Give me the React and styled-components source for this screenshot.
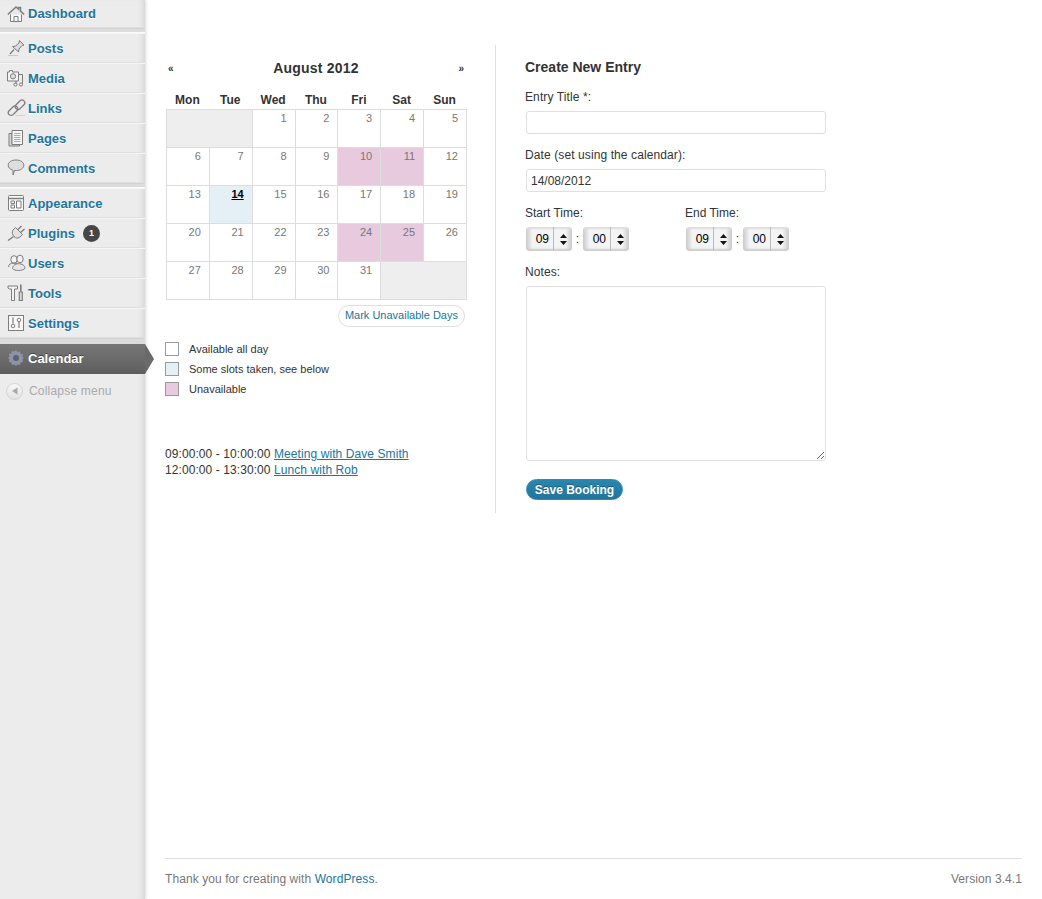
import styled, { createGlobalStyle } from 'styled-components'

const GlobalStyle = createGlobalStyle`
  html, body {
    margin: 0;
    padding: 0;
    background: #fff;
  }
  body {
    font-family: "Liberation Sans", Arial, sans-serif;
    font-size: 12px;
    color: #333;
  }
  * {
    box-sizing: border-box;
  }
`

const stroke = { fill: 'none', stroke: '#7d7d7d', strokeWidth: 1 }

const icons = {
  dashboard: (
    <svg width="18" height="18" viewBox="0 0 18 18" {...stroke}>
      <path d="M3.500 8v8.500h11V8" fill="#f8f8f8" />
      <path d="M.8 9.500L9 2l2.500 2.200V2.500h2v3.600l3.700 3.400" strokeWidth="1.500" fill="#e8e8e8" />
      <path d="M7 16.500v-5h4v5M4 16.500h10" />
    </svg>
  ),
  posts: (
    <svg width="20" height="18" viewBox="0 0 20 18" {...stroke}>
      <path d="M12.500 1.500l4.500 4.500-2 .5-3 3.500-.5 3-6-5.500 3-.5 3.500-3z" fill="#dcdcdc" />
      <path d="M7 10.500l-4 4.500" strokeWidth="1.300" />
      <path d="M1 16.500h10" stroke="#c8c8c8" />
    </svg>
  ),
  media: (
    <svg width="18" height="18" viewBox="0 0 18 18" {...stroke}>
      <path d="M.5 3h2V1.500h3V3h6v9H.5z" fill="#f3f3f3" />
      <circle cx="6" cy="7.300" r="2.600" fill="#ddd" />
      <path d="M12 5.500h3.500M15.500 5.500v9M9 12v3" />
      <circle cx="8.500" cy="15.500" r="1.600" />
      <circle cx="14" cy="15.500" r="1.600" />
    </svg>
  ),
  links: (
    <svg width="20" height="18" viewBox="0 0 20 18" {...stroke}>
      <rect x="0.500" y="9" width="11" height="5.500" rx="2.700" transform="rotate(-45 6 11.700)" strokeWidth="1.300" />
      <rect x="7.500" y="3" width="11" height="5.500" rx="2.700" transform="rotate(-45 13 5.700)" strokeWidth="1.300" />
      <path d="M8 16.500h10" stroke="#d0d0d0" />
    </svg>
  ),
  pages: (
    <svg width="18" height="18" viewBox="0 0 18 18" {...stroke}>
      <path d="M2 4.500h3v11h7.500v1.500H2z" fill="#d8d8d8" />
      <path d="M5 1.500h10.500v14H5z" fill="#f6f6f6" />
      <path d="M7 4.500h6.500M7 6.500h6.500M7 8.500h6.500M7 10.500h6.500M7 12.500h6.500" stroke="#aaa" />
    </svg>
  ),
  comments: (
    <svg width="18" height="18" viewBox="0 0 18 18" {...stroke}>
      <path d="M9 1c4.700 0 7.800 2.300 7.800 5.200S13.700 11.500 9.700 11.500H7.500L6 16v-4.800C3.300 10.600 1.200 8.700 1.200 6.200 1.200 3.300 4.300 1 9 1z" fill="#dedede" />
    </svg>
  ),
  appearance: (
    <svg width="18" height="18" viewBox="0 0 18 18" {...stroke}>
      <rect x="1.500" y="1.500" width="15" height="15" rx="1" fill="#fafafa" />
      <path d="M1.500 4.500h15" strokeWidth="1.500" />
      <path d="M4 7h3.500v2.500H4zM4 11h3.500v3H4zM9.500 7h4.500v7H9.500z" />
    </svg>
  ),
  plugins: (
    <svg width="20" height="18" viewBox="0 0 20 18" {...stroke}>
      <path d="M8.500 3.500l7 7-2.500 2.500c-2.200 1.800-4.500 1.200-6-.5S4.500 8.500 6 6z" fill="#e2e2e2" />
      <path d="M11 5.500L14.500 2M13.500 8.500L17.500 5M6.500 12.500L1 16.500" strokeWidth="1.400" />
    </svg>
  ),
  users: (
    <svg width="20" height="18" viewBox="0 0 20 18" {...stroke}>
      <ellipse cx="7" cy="5.500" rx="3.200" ry="3.800" fill="#f3f3f3" />
      <ellipse cx="13" cy="5" rx="3.200" ry="3.800" fill="#f3f3f3" />
      <path d="M1.500 13c0-2.500 2-4 5.500-4 1.500 0 3 .5 4 1.500" />
      <path d="M5.500 14.500c0-2.600 2.500-4.800 6-4.800s6.500 2 6.500 4.500c-1 1.600-3.800 2.300-6.500 2.300s-5-.6-6-2z" fill="#e6e6e6" />
    </svg>
  ),
  tools: (
    <svg width="20" height="18" viewBox="0 0 20 18" {...stroke}>
      <path d="M1 2h9.500v3H7.500v11.500h-3V5H2.500L1 4z" fill="#f3f3f3" />
      <path d="M13.800 .5v7" strokeWidth="1.600" />
      <path d="M12.300 8h3v8.500h-3z" fill="#ddd" strokeWidth="1.200" />
    </svg>
  ),
  settings: (
    <svg width="18" height="18" viewBox="0 0 18 18" {...stroke}>
      <rect x="1.500" y="1.500" width="15" height="15" fill="#fafafa" />
      <path d="M6 3.500v6M12 8v6" strokeWidth="1.200" />
      <circle cx="6" cy="12" r="1.800" />
      <circle cx="12" cy="6" r="1.800" />
    </svg>
  ),
  calendar: (
    <svg width="18" height="18" viewBox="0 0 18 18">
      <path
        d="M9 1l1.500 2 2.500-.7.600 2.500 2.500.6-.7 2.500L17 9l-1.600 1.500.7 2.500-2.500.6-.6 2.500-2.500-.7L9 17l-1.500-1.600-2.500.7-.6-2.500-2.500-.6.7-2.500L1 9l1.600-1.500-.7-2.500 2.500-.6.6-2.500 2.500.7z"
        fill="#8e93a8"
      />
      <circle cx="9" cy="9" r="3" fill="#5d6071" />
    </svg>
  ),
}

const contentItems = [
  { key: 'posts', label: 'Posts' },
  { key: 'media', label: 'Media' },
  { key: 'links', label: 'Links' },
  { key: 'pages', label: 'Pages' },
  { key: 'comments', label: 'Comments' },
]
const adminItems = [
  { key: 'appearance', label: 'Appearance' },
  { key: 'plugins', label: 'Plugins', badge: 1 },
  { key: 'users', label: 'Users' },
  { key: 'tools', label: 'Tools' },
  { key: 'settings', label: 'Settings' },
]

// span = number of empty columns merged into one grey cell
const weeks = [
  [{ span: 2 }, 1, 2, 3, 4, 5],
  [6, 7, 8, 9, 10, 11, 12],
  [13, 14, 15, 16, 17, 18, 19],
  [20, 21, 22, 23, 24, 25, 26],
  [27, 28, 29, 30, 31, { span: 2 }],
]
const unavailable = [10, 11, 24, 25]

function dayKind(day) {
  if (day === 14) return 'today'
  if (unavailable.includes(day)) return 'off'
  return 'free'
}

function MenuRows({ items }) {
  return items.map((item) => (
    <MenuRow key={item.key}>
      <IconSlot>{icons[item.key]}</IconSlot>
      <MenuLabel>{item.label}</MenuLabel>
      {item.badge && <Badge>{item.badge}</Badge>}
    </MenuRow>
  ))
}

function TimePicker({ value }) {
  return (
    <Stepper>
      <StepperValue>{value}</StepperValue>
      <StepperArrows>
        <svg width="7" height="11" viewBox="0 0 7 11" fill="#111">
          <path d="M3.500 0L7 4H0zM3.500 11L0 7h7z" />
        </svg>
      </StepperArrows>
    </Stepper>
  )
}

function App() {
  return (
    <Page>
      <GlobalStyle />
      <Sidebar>
        <FirstRow>
          <IconSlot>{icons.dashboard}</IconSlot>
          <MenuLabel>Dashboard</MenuLabel>
        </FirstRow>
        <Separator />
        <MenuRows items={contentItems} />
        <Separator />
        <MenuRows items={adminItems} />
        <LastSeparator />
        <ActiveRow>
          <IconSlot>{icons.calendar}</IconSlot>
          <ActiveLabel>Calendar</ActiveLabel>
        </ActiveRow>
        <CollapseRow>
          <CollapseButton>
            <svg width="8" height="8" viewBox="0 0 8 8" fill="#aaa">
              <path d="M6.500 0.500v7L1 4z" />
            </svg>
          </CollapseButton>
          Collapse menu
        </CollapseRow>
      </Sidebar>

      <Content>
        <Columns>
          <LeftColumn>
            <MonthBar>
              <MonthNav>«</MonthNav>
              <MonthTitle>August 2012</MonthTitle>
              <MonthNav>»</MonthNav>
            </MonthBar>
            <CalendarTable>
              <thead>
                <tr>
                  {['Mon', 'Tue', 'Wed', 'Thu', 'Fri', 'Sat', 'Sun'].map((d) => (
                    <DayHead key={d}>{d}</DayHead>
                  ))}
                </tr>
              </thead>
              <tbody>
                {weeks.map((week, w) => (
                  <tr key={w}>
                    {week.map((day, d) =>
                      day.span ? (
                        <DayCell key={d} colSpan={day.span} $kind="empty" />
                      ) : (
                        <DayCell key={d} $kind={dayKind(day)}>
                          {day}
                        </DayCell>
                      ),
                    )}
                  </tr>
                ))}
              </tbody>
            </CalendarTable>
            <MarkRow>
              <MarkButton>Mark Unavailable Days</MarkButton>
            </MarkRow>
            <Legend>
              <LegendRow>
                <Swatch $color="#fff" />
                Available all day
              </LegendRow>
              <LegendRow>
                <Swatch $color="#e5eff6" />
                Some slots taken, see below
              </LegendRow>
              <LegendRow>
                <Swatch $color="#e8cade" />
                Unavailable
              </LegendRow>
            </Legend>
            <Events>
              <div>
                09:00:00 - 10:00:00 <EventLink href="#">Meeting with Dave Smith</EventLink>
              </div>
              <div>
                12:00:00 - 13:30:00 <EventLink href="#">Lunch with Rob</EventLink>
              </div>
            </Events>
          </LeftColumn>

          <RightColumn>
            <FormTitle>Create New Entry</FormTitle>
            <FieldLabel>Entry Title *:</FieldLabel>
            <TextInput type="text" />
            <FieldLabel>Date (set using the calendar):</FieldLabel>
            <TextInput type="text" defaultValue="14/08/2012" />
            <TimeRow>
              <TimeGroup>
                <TimeLabel>Start Time:</TimeLabel>
                <TimeControls>
                  <TimePicker value="09" />
                  <Colon>:</Colon>
                  <TimePicker value="00" />
                </TimeControls>
              </TimeGroup>
              <TimeGroup>
                <TimeLabel>End Time:</TimeLabel>
                <TimeControls>
                  <TimePicker value="09" />
                  <Colon>:</Colon>
                  <TimePicker value="00" />
                </TimeControls>
              </TimeGroup>
            </TimeRow>
            <FieldLabel>Notes:</FieldLabel>
            <Notes />
            <SaveButton>Save Booking</SaveButton>
          </RightColumn>
        </Columns>

        <Footer>
          <span>
            Thank you for creating with <FooterLink href="#">WordPress</FooterLink>.
          </span>
          <span>Version 3.4.1</span>
        </Footer>
      </Content>
    </Page>
  )
}

const Page = styled.div`
  display: flex;
  min-height: 899px;
`

const Sidebar = styled.nav`
  width: 145px;
  flex: none;
  background: #ececec;
  box-shadow: inset -6px 0 6px -5px #ccc, 1px 0 3px rgba(0, 0, 0, 0.15);
  position: relative;
`

const MenuRow = styled.div`
  display: flex;
  align-items: center;
  height: 30px;
  padding-left: 7px;
  border-top: 1px solid #f6f6f6;
  border-bottom: 1px solid #dfdfdf;
`

const FirstRow = styled(MenuRow)`
  height: 28px;
  border-top: none;
`

const IconSlot = styled.span`
  width: 21px;
  height: 18px;
  flex: none;
  display: flex;
`

const MenuLabel = styled.span`
  font-size: 13px;
  font-weight: bold;
  color: #21759b;
  text-shadow: 0 1px 0 #fff;
`

const Badge = styled.span`
  width: 17px;
  height: 17px;
  margin-left: 8px;
  border-radius: 50%;
  background: #464646;
  color: #fff;
  font-size: 9px;
  font-weight: bold;
  display: flex;
  align-items: center;
  justify-content: center;
`

const Separator = styled.div`
  height: 5px;
  background: #dcdcdc;
  border-top: 1px solid #d2d2d2;
  border-bottom: 1px solid #fafafa;
`

const LastSeparator = styled(Separator)`
  height: 6px;
  border-bottom: none;
`

const ActiveRow = styled.div`
  position: relative;
  display: flex;
  align-items: center;
  height: 30px;
  padding: 0 0 2px 7px;
  background: linear-gradient(to bottom, #777, #5e5e5e);

  &::after {
    content: '';
    position: absolute;
    left: 100%;
    top: 0;
    border-style: solid;
    border-width: 15px 0 15px 9px;
    border-color: transparent transparent transparent #6a6a6a;
  }
`

const ActiveLabel = styled.span`
  font-size: 13px;
  font-weight: bold;
  color: #fff;
  text-shadow: 0 -1px 0 rgba(0, 0, 0, 0.4);
`

const CollapseRow = styled.div`
  display: flex;
  align-items: center;
  gap: 6px;
  height: 34px;
  padding-left: 6px;
  font-size: 12px;
  letter-spacing: 0.2px;
  color: #aaa;
`

const CollapseButton = styled.span`
  width: 17px;
  height: 17px;
  border-radius: 50%;
  border: 1px solid #d4d4d4;
  background: linear-gradient(to bottom, #f8f8f8, #e2e2e2);
  display: flex;
  align-items: center;
  justify-content: center;
`

const Content = styled.main`
  flex: 1;
  display: flex;
  flex-direction: column;
  padding: 45px 20px 0 20px;
`

const Columns = styled.div`
  display: flex;
  align-items: flex-start;
`

const LeftColumn = styled.section`
  width: 331px;
  height: 468px;
  border-right: 1px solid #dfdfdf;
`

const MonthBar = styled.div`
  width: 302px;
  height: 47px;
  display: flex;
  align-items: flex-start;
  justify-content: space-between;
  padding: 15px 3px 0;
`

const MonthNav = styled.span`
  font-size: 10px;
  font-weight: bold;
  line-height: 17px;
`

const MonthTitle = styled.span`
  font-size: 14px;
  letter-spacing: 0.2px;
  font-weight: bold;
  line-height: 17px;
`

const CalendarTable = styled.table`
  width: 301px;
  border-collapse: collapse;
  table-layout: fixed;
  margin-left: 1px;
`

const DayHead = styled.th`
  height: 17px;
  padding: 1px 1px 1px 0;
  font-size: 12px;
  font-weight: bold;
  text-align: center;
`

const dayBackgrounds = {
  empty: '#eee',
  today: '#e5eff6',
  off: '#e8cade',
  free: '#fff',
}

const DayCell = styled.td`
  height: 38px;
  padding: 1px 8px 0 0;
  vertical-align: top;
  text-align: right;
  font-size: 11px;
  line-height: 14px;
  border: 1px solid #ddd;
  background: ${(p) => dayBackgrounds[p.$kind]};
  color: ${(p) => (p.$kind === 'today' ? '#000' : '#777')};
  font-weight: ${(p) => (p.$kind === 'today' ? 'bold' : 'normal')};
  text-decoration: ${(p) => (p.$kind === 'today' ? 'underline' : 'none')};
`

const MarkRow = styled.div`
  width: 300px;
  display: flex;
  justify-content: flex-end;
  margin-top: 5px;
`

const MarkButton = styled.a`
  height: 22px;
  padding: 0 6px;
  line-height: 19px;
  font-size: 11px;
  color: #21759b;
  border: 1px solid #dfdfdf;
  border-radius: 11px;
`

const Legend = styled.div`
  margin-top: 15px;
  display: flex;
  flex-direction: column;
  gap: 6px;
`

const LegendRow = styled.div`
  display: flex;
  align-items: center;
  gap: 10px;
  height: 14px;
  font-size: 11px;
`

const Swatch = styled.span`
  width: 14px;
  height: 14px;
  border: 1px solid #999;
  background: ${(p) => p.$color};
`

const Events = styled.div`
  margin-top: 50px;
  font-size: 12px;
  line-height: 16px;
  letter-spacing: 0.08px;
`

const EventLink = styled.a`
  color: #21759b;
  text-decoration: underline;
`

const RightColumn = styled.section`
  padding: 14px 0 0 29px;
  width: 360px;
`

const FormTitle = styled.h3`
  margin: 0 0 14px;
  font-size: 14px;
  line-height: 17px;
  font-weight: bold;
`

const FieldLabel = styled.div`
  font-size: 12px;
  line-height: 15px;
  letter-spacing: 0.1px;
  margin-bottom: 6px;
`

const TextInput = styled.input`
  display: block;
  width: 300px;
  height: 23px;
  margin: 0 0 14px 1px;
  padding: 0 4px;
  border: 1px solid #dfdfdf;
  border-radius: 3px;
  font-family: inherit;
  font-size: 12px;
  color: #333;
  background: #fff;
`

const TimeRow = styled.div`
  display: flex;
`

const TimeGroup = styled.div`
  width: 160px;
  flex: none;
`

const TimeLabel = styled.div`
  font-size: 12px;
  line-height: 15px;
  margin-bottom: 6px;
`

const TimeControls = styled.div`
  display: flex;
  align-items: center;
  margin: 0 0 14px 1px;
`

const Colon = styled.span`
  width: 11px;
  text-align: center;
  font-size: 12px;
`

const Stepper = styled.div`
  display: flex;
  width: 46px;
  height: 24px;
  border-radius: 4px;
  background: linear-gradient(to right, #c8c8c8, #f4f4f4 14%, #f4f4f4 86%, #c8c8c8);
  box-shadow: inset 0 -2px 2px #ccc, inset 0 2px 2px #ddd;
`

const StepperValue = styled.span`
  width: 28px;
  text-align: right;
  padding-right: 4px;
  font-size: 12px;
  line-height: 24px;
  color: #000;
  border-right: 1px solid #bbb;
`

const StepperArrows = styled.span`
  flex: 1;
  display: flex;
  align-items: center;
  justify-content: center;
`

const Notes = styled.textarea`
  display: block;
  width: 300px;
  height: 175px;
  margin: 0 0 18px 1px;
  border: 1px solid #dfdfdf;
  border-radius: 3px;
  background: #fff;
`

const SaveButton = styled.button`
  display: block;
  width: 97px;
  height: 21px;
  margin-left: 1px;
  padding: 0;
  border: 1px solid #298cba;
  border-radius: 11px;
  background: linear-gradient(to bottom, #2a86ae, #21759b);
  color: #fff;
  font-family: inherit;
  font-size: 12px;
  font-weight: bold;
  text-shadow: 0 -1px 0 rgba(0, 0, 0, 0.3);
`

const Footer = styled.footer`
  margin-top: auto;
  height: 41px;
  display: flex;
  justify-content: space-between;
  align-items: center;
  border-top: 1px solid #dfdfdf;
  font-size: 12px;
  letter-spacing: 0.08px;
  color: #777;
`

const FooterLink = styled.a`
  color: #21759b;
  text-decoration: none;
`

export default App
